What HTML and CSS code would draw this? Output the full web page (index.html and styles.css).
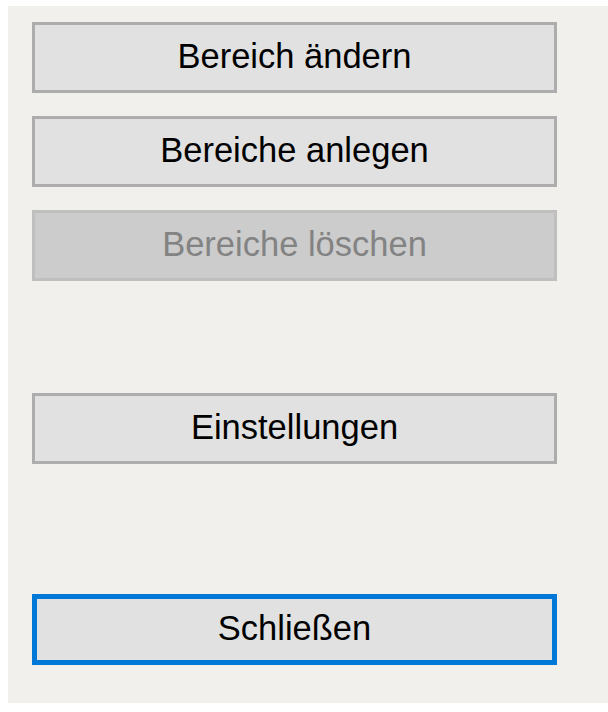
FILE: index.html
```html
<!DOCTYPE html>
<html lang="de">
<head>
<meta charset="utf-8">
<title>Bereiche</title>
<link rel="stylesheet" href="styles.css">
</head>
<body>
<div class="panel">
  <button class="btn">Bereich ändern</button>
  <button class="btn gap-s">Bereiche anlegen</button>
  <button class="btn gap-s" disabled>Bereiche löschen</button>
  <button class="btn gap-m">Einstellungen</button>
  <button class="btn gap-l focus">Schließen</button>
</div>
</body>
</html>
```
FILE: styles.css
```css
html, body {
  margin: 0;
  padding: 0;
  background: #ffffff;
}
.panel {
  margin: 6px 0 0 8px;
  width: 600px;
  height: 697px;
  background: #f1f0ed;
  box-sizing: border-box;
  padding: 16px 0 0 24px;
  display: flex;
  flex-direction: column;
  align-items: flex-start;
}
.btn {
  width: 525px;
  height: 71px;
  box-sizing: border-box;
  margin: 0;
  padding: 0 0 2px 0;
  background: #e1e1e1;
  border: 3px solid #adadad;
  color: #000000;
  font-family: "Liberation Sans", Arial, sans-serif;
  font-size: 34.5px;
  text-align: center;
  line-height: 1;
  outline: none;
}
.gap-s { margin-top: 23px; }
.gap-m { margin-top: 112px; }
.gap-l { margin-top: 130px; }
.btn:disabled {
  background: #cccccc;
  border-color: #bfbfbf;
  color: #838383;
}
.focus {
  border: 5px solid #0078d7;
}
```
